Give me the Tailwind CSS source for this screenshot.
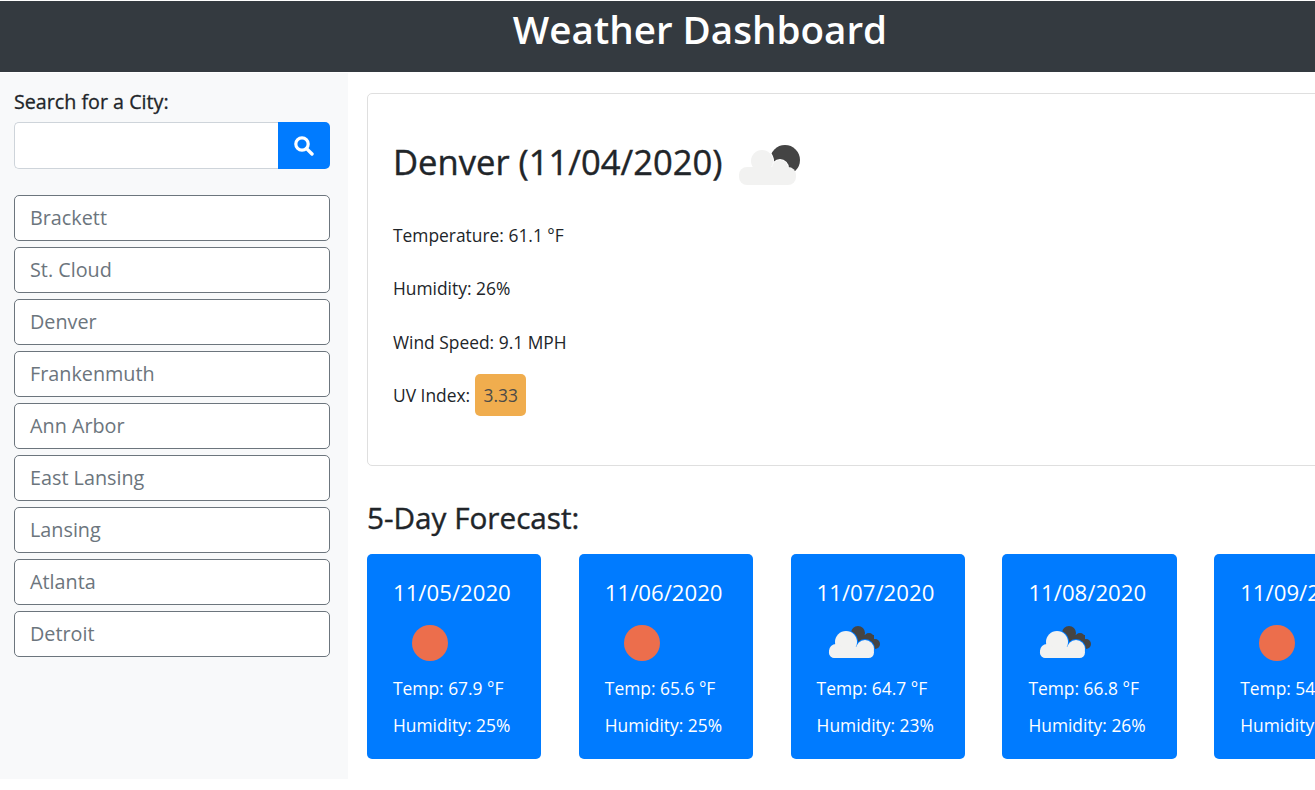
<!DOCTYPE html>
<html lang="en">
<head>
    <meta charset="UTF-8">
    <meta name="viewport" content="width=device-width, initial-scale=1">
    <title>Weather Dashboard</title>
    <script src="https://cdn.jsdelivr.net/npm/@tailwindcss/browser@4"></script>
</head>
<body class="bg-white overflow-hidden h-[790px] font-['Open_Sans',sans-serif] text-[#212529]">
<div class="w-[1400px]">
    <header class="mt-px h-[71px] bg-[#343a40] text-white text-center text-[38.6px] leading-[56px] font-semibold">Weather Dashboard</header>
    <div class="flex">
        <!-- sidebar -->
        <aside class="w-[348px] h-[706px] mt-px bg-[#f8f9fa] px-[14px] pt-[17px]">
            <label class="block text-[19.7px] leading-[24px] [-webkit-text-stroke:0.3px] text-[#212529] mb-[8px]">Search for a City:</label>
            <div class="flex h-[47px] w-[316px]">
                <input type="text" class="flex-1 min-w-0 bg-white border border-[#ced4da] border-r-0 rounded-l-[5px]">
                <button class="w-[52px] bg-[#007bff] rounded-r-[5px] flex items-center justify-center pr-[2px]">
                    <svg width="21" height="21" viewBox="0 0 21 21" fill="none" stroke="white">
                        <circle cx="9" cy="9" r="6.2" stroke-width="3.2"/>
                        <path d="M13.6 13.6 L19 19" stroke-width="3.4" stroke-linecap="round"/>
                    </svg>
                </button>
            </div>
            <div class="mt-[26px] flex flex-col gap-[6px] w-[316px]">
                <button class="h-[46px] pb-[1px] bg-white border border-[#6c757d] rounded-[5px] text-left pl-[15px] text-[19.8px] text-[#6c757d]">Brackett</button>
                <button class="h-[46px] pb-[1px] bg-white border border-[#6c757d] rounded-[5px] text-left pl-[15px] text-[19.8px] text-[#6c757d]">St. Cloud</button>
                <button class="h-[46px] pb-[1px] bg-white border border-[#6c757d] rounded-[5px] text-left pl-[15px] text-[19.8px] text-[#6c757d]">Denver</button>
                <button class="h-[46px] pb-[1px] bg-white border border-[#6c757d] rounded-[5px] text-left pl-[15px] text-[19.8px] text-[#6c757d]">Frankenmuth</button>
                <button class="h-[46px] pb-[1px] bg-white border border-[#6c757d] rounded-[5px] text-left pl-[15px] text-[19.8px] text-[#6c757d]">Ann Arbor</button>
                <button class="h-[46px] pb-[1px] bg-white border border-[#6c757d] rounded-[5px] text-left pl-[15px] text-[19.8px] text-[#6c757d]">East Lansing</button>
                <button class="h-[46px] pb-[1px] bg-white border border-[#6c757d] rounded-[5px] text-left pl-[15px] text-[19.8px] text-[#6c757d]">Lansing</button>
                <button class="h-[46px] pb-[1px] bg-white border border-[#6c757d] rounded-[5px] text-left pl-[15px] text-[19.8px] text-[#6c757d]">Atlanta</button>
                <button class="h-[46px] pb-[1px] bg-white border border-[#6c757d] rounded-[5px] text-left pl-[15px] text-[19.8px] text-[#6c757d]">Detroit</button>
            </div>
        </aside>
        <!-- main -->
        <main class="flex-1 pl-[19px] pt-[21px]">
            <section class="h-[373px] w-[1010px] border border-[#dfdfdf] rounded-[5px] px-[25px] pt-[44px]">
                <div class="flex items-center h-[48px]">
                    <h2 class="text-[34.6px] leading-[48px] [-webkit-text-stroke:0.4px] text-[#212529]">Denver (11/04/2020)</h2>
                    <svg class="ml-[17px] mt-[2px]" width="62" height="44" viewBox="0 0 62 44">
                        <circle cx="46" cy="19" r="15" fill="#444"/>
                        <g fill="#f2f2f1" stroke="#fff" stroke-width="2"><circle cx="23" cy="20" r="11"/><circle cx="41" cy="27" r="8"/></g>
                        <g fill="#f2f2f1">
                            <circle cx="23" cy="20" r="11"/><circle cx="41" cy="27" r="8"/>
                            <rect x="0" y="26" width="57" height="18" rx="8"/>
                        </g>
                    </svg>
                </div>
                <p class="mt-[36px] text-[17.4px] leading-[26px]">Temperature: 61.1 °F</p>
                <p class="mt-[27px] text-[17.4px] leading-[26px]">Humidity: 26%</p>
                <p class="mt-[28px] text-[17.4px] leading-[26px]">Wind Speed: 9.1 MPH</p>
                <p class="mt-[19px] text-[17.4px] leading-[42px] flex">UV Index:<span class="ml-[5px] w-[51px] h-[42px] bg-[#f0ad4e] rounded-[5px] text-center text-[#4a4a48]">3.33</span></p>
            </section>
            <h3 class="mt-[32px] text-[29.7px] leading-[40px] [-webkit-text-stroke:0.4px] text-[#212529]">5-Day Forecast:</h3>
            <div class="mt-[16px] flex gap-[37.5px]">
                <div class="w-[174.3px] h-[205px] bg-[#007bff] rounded-[5px] text-white pl-[26px] pt-[23px]">
                    <p class="text-[22.2px] leading-[32px]">11/05/2020</p>
                    <svg class="mt-[16px] ml-[19px]" width="36" height="36" viewBox="0 0 36 36"><circle cx="18" cy="18" r="18" fill="#ec6e4c"/></svg>
                    <p class="mt-[14px] text-[17.4px] leading-[26px]">Temp: 67.9 °F</p>
                    <p class="mt-[11px] text-[17.4px] leading-[26px]">Humidity: 25%</p>
                </div>
                <div class="w-[174.3px] h-[205px] bg-[#007bff] rounded-[5px] text-white pl-[26px] pt-[23px]">
                    <p class="text-[22.2px] leading-[32px]">11/06/2020</p>
                    <svg class="mt-[16px] ml-[19px]" width="36" height="36" viewBox="0 0 36 36"><circle cx="18" cy="18" r="18" fill="#ec6e4c"/></svg>
                    <p class="mt-[14px] text-[17.4px] leading-[26px]">Temp: 65.6 °F</p>
                    <p class="mt-[11px] text-[17.4px] leading-[26px]">Humidity: 25%</p>
                </div>
                <div class="w-[174.3px] h-[205px] bg-[#007bff] rounded-[5px] text-white pl-[26px] pt-[23px]">
                    <p class="text-[22.2px] leading-[32px]">11/07/2020</p>
                    <svg class="mt-[16px] ml-[11px]" width="54" height="36" viewBox="0 0 54 36">
                        <g fill="#444"><circle cx="30" cy="8" r="7"/><circle cx="41" cy="13" r="5"/><circle cx="47" cy="19" r="5"/><rect x="30" y="10" width="16" height="12"/></g>
                        <g fill="#f2f2f1" stroke="#007bff" stroke-width="2"><circle cx="18" cy="17" r="11"/><circle cx="37" cy="24" r="9"/></g>
                        <g fill="#f2f2f1"><circle cx="18" cy="17" r="11"/><circle cx="37" cy="24" r="9"/><circle cx="8" cy="26" r="7"/><rect x="1" y="22" width="45" height="11" rx="5.5"/></g>
                    </svg>
                    <p class="mt-[14px] text-[17.4px] leading-[26px]">Temp: 64.7 °F</p>
                    <p class="mt-[11px] text-[17.4px] leading-[26px]">Humidity: 23%</p>
                </div>
                <div class="w-[174.3px] h-[205px] bg-[#007bff] rounded-[5px] text-white pl-[26px] pt-[23px]">
                    <p class="text-[22.2px] leading-[32px]">11/08/2020</p>
                    <svg class="mt-[16px] ml-[11px]" width="54" height="36" viewBox="0 0 54 36">
                        <g fill="#444"><circle cx="30" cy="8" r="7"/><circle cx="41" cy="13" r="5"/><circle cx="47" cy="19" r="5"/><rect x="30" y="10" width="16" height="12"/></g>
                        <g fill="#f2f2f1" stroke="#007bff" stroke-width="2"><circle cx="18" cy="17" r="11"/><circle cx="37" cy="24" r="9"/></g>
                        <g fill="#f2f2f1"><circle cx="18" cy="17" r="11"/><circle cx="37" cy="24" r="9"/><circle cx="8" cy="26" r="7"/><rect x="1" y="22" width="45" height="11" rx="5.5"/></g>
                    </svg>
                    <p class="mt-[14px] text-[17.4px] leading-[26px]">Temp: 66.8 °F</p>
                    <p class="mt-[11px] text-[17.4px] leading-[26px]">Humidity: 26%</p>
                </div>
                <div class="w-[174.3px] h-[205px] bg-[#007bff] rounded-[5px] text-white pl-[26px] pt-[23px]">
                    <p class="text-[22.2px] leading-[32px]">11/09/2020</p>
                    <svg class="mt-[16px] ml-[19px]" width="36" height="36" viewBox="0 0 36 36"><circle cx="18" cy="18" r="18" fill="#ec6e4c"/></svg>
                    <p class="mt-[14px] text-[17.4px] leading-[26px]">Temp: 54.3 °F</p>
                    <p class="mt-[11px] text-[17.4px] leading-[26px]">Humidity: 31%</p>
                </div>
            </div>
        </main>
    </div>
</div>
</body>
</html>
